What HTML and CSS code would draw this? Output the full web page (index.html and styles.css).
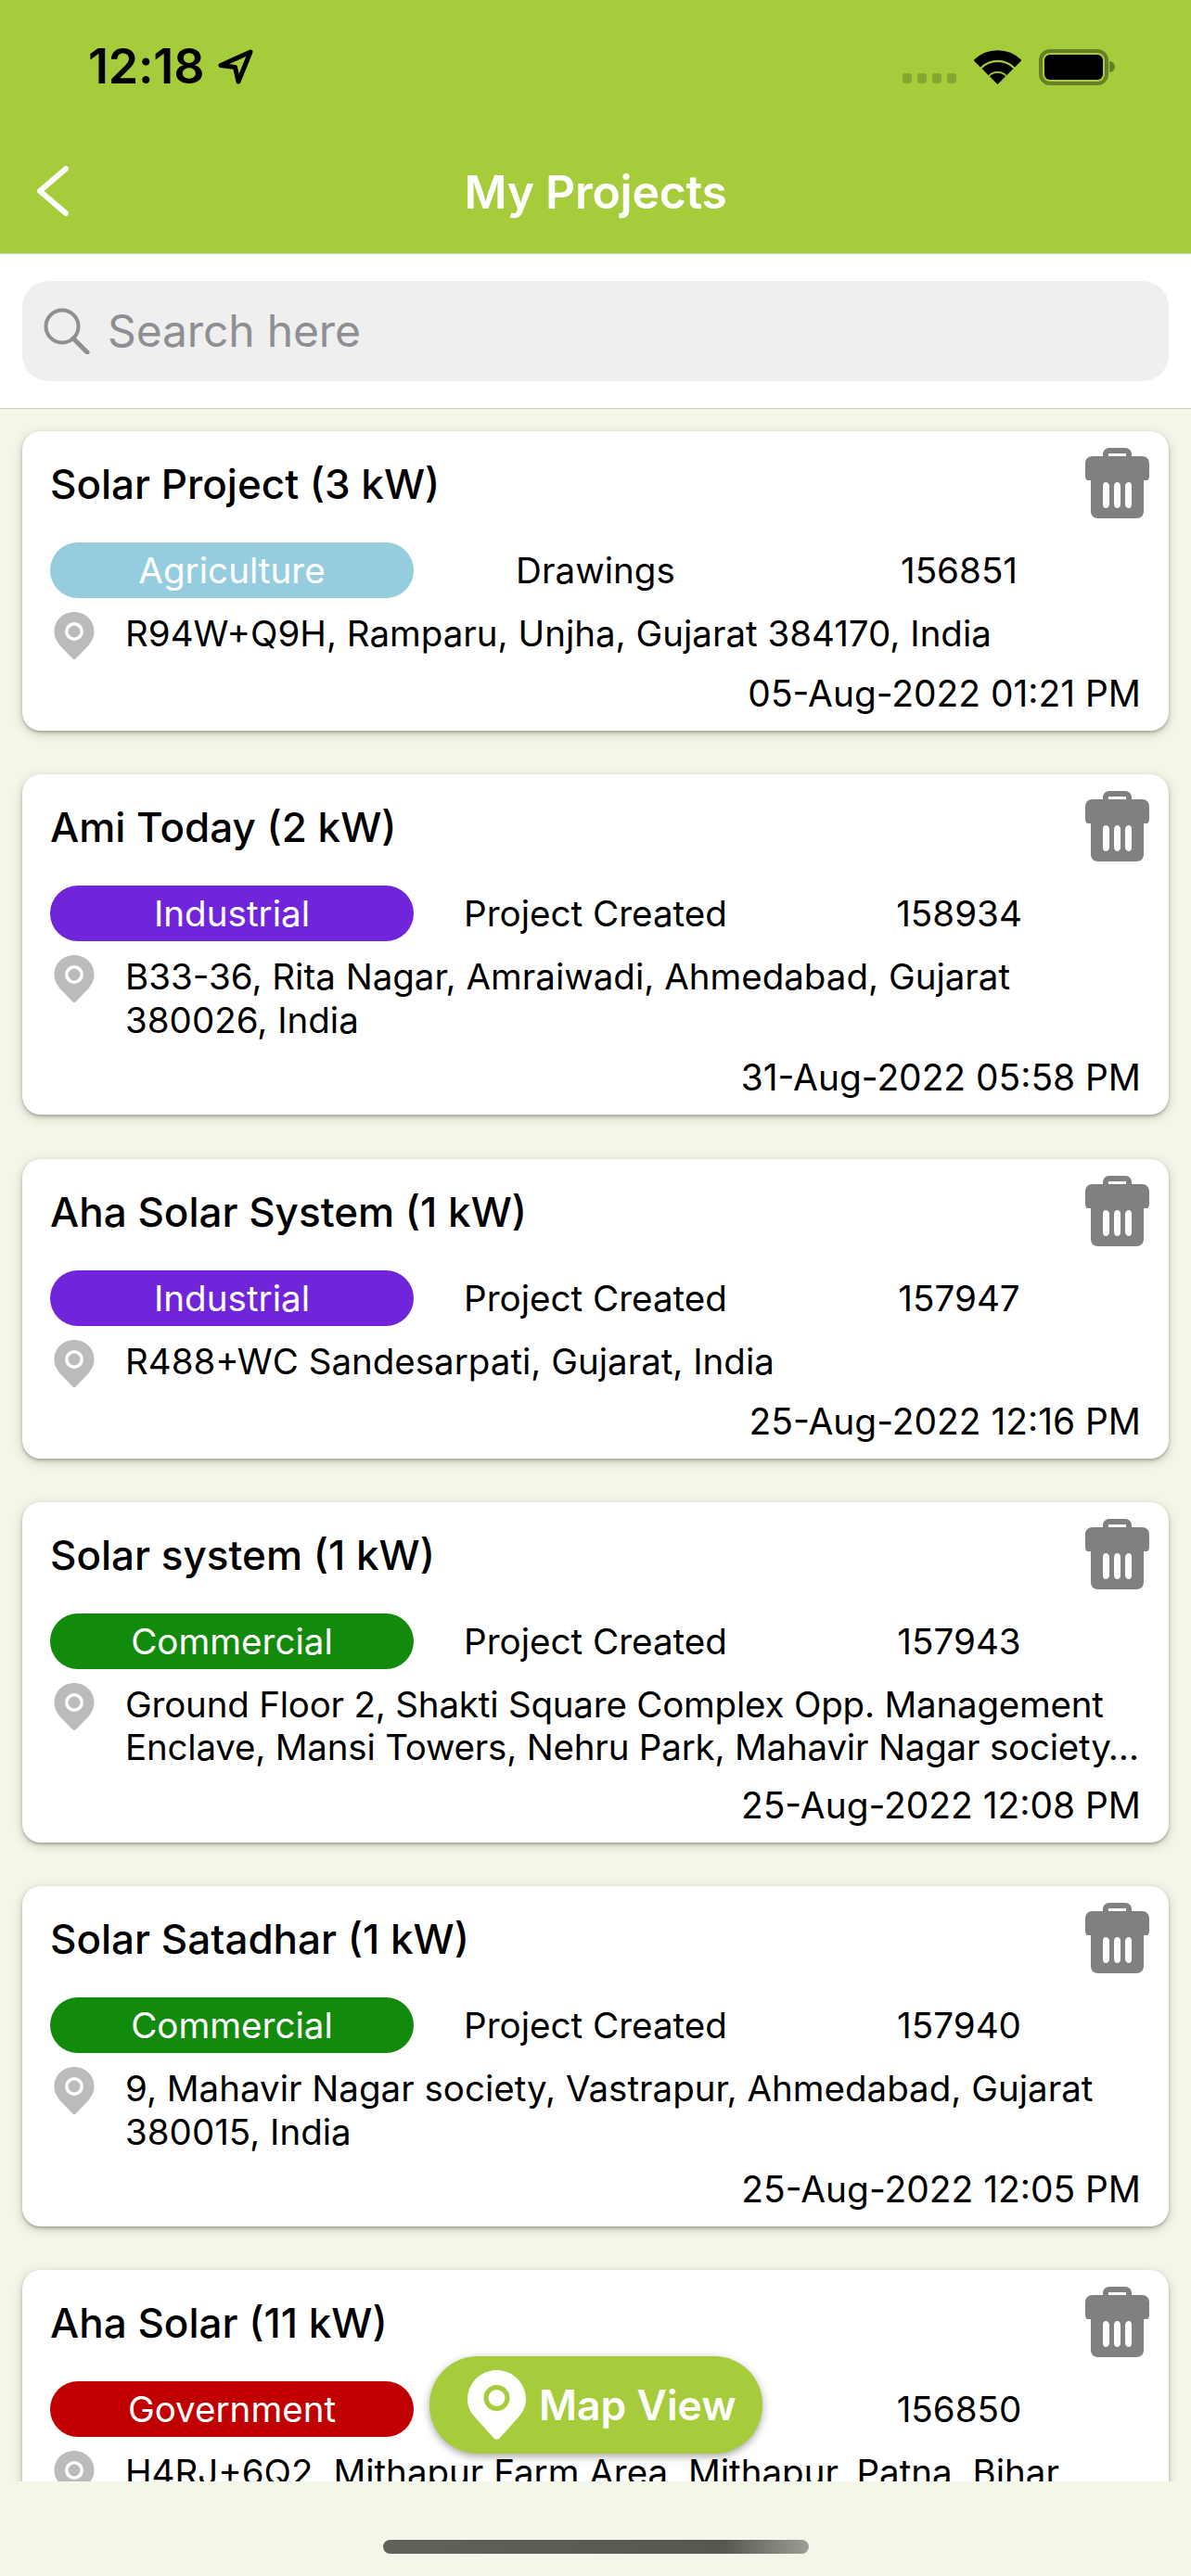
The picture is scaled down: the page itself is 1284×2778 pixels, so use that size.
FILE: index.html
```html
<!DOCTYPE html>
<html lang="en">
<head>
<meta charset="utf-8">
<title>My Projects</title>
<link rel="stylesheet" href="styles.css">
</head>
<body>
<svg class="defs" width="0" height="0" aria-hidden="true">
  <symbol id="trash" viewBox="0 0 69 76">
    <path fill="#808080" fill-rule="evenodd" d="M19 9V7c0-4 3-7 7-7h17c4 0 7 3 7 7v2h11c5 0 8 3 8 8v13c0 3-1 5-3 5h-3v33c0 5-3 8-8 8H14c-5 0-8-3-8-8V35H3c-2 0-3-2-3-5V17c0-5 3-8 8-8h11zM25 6v3h19V6H25zM22 37c-2 0-3 2-3 4v20c0 2 1 4 3 4s4-2 4-4V41c0-2-2-4-4-4zM34.500 37c-2 0-3.500 2-3.500 4v20c0 2 1.500 4 3.500 4s3.500-2 3.500-4V41c0-2-1.500-4-3.500-4zM47 37c-2 0-4 2-4 4v20c0 2 2 4 4 4s3-2 3-4V41c0-2-1-4-3-4z"/>
  </symbol>
  <symbol id="pin" viewBox="0 0 44 51">
    <path fill="#bbb" fill-rule="evenodd" d="M22 0c12 0 21.500 9 21.500 21 0 6-2.500 10.500-6 15L24 50c-1 1.300-3 1.300-4 0L6.500 36C3 31.500.5 27 .5 21 .5 9 10 0 22 0zm0 11a10 10 0 1 0 0 20 10 10 0 0 0 0-20zm0 3.500a6.500 6.500 0 1 1 0 13 6.500 6.500 0 0 1 0-13z"/>
  </symbol>
</svg>

<div class="app">
  <header class="topbar">
    <div class="status">
      <div class="status-left">
        <span class="clock">12:18</span>
        <svg class="arrow" viewBox="0 0 38 38"><path d="M35 3 3 17.500l15.500 2 3.500 15.500z" fill="none" stroke="#000" stroke-width="5" stroke-linejoin="round"/></svg>
      </div>
      <div class="status-right">
        <div class="signal"><i></i><i></i><i></i><i></i></div>
        <svg class="wifi" viewBox="0 0 51 37"><path d="M3.200 14.700A31.500 31.500 0 0 1 47.800 14.700" fill="none" stroke="#000" stroke-width="10.500"/><path d="M12.100 23.600A19 19 0 0 1 38.900 23.600" fill="none" stroke="#000" stroke-width="10"/><path d="M25.500 37 16.800 28.300A12.300 12.300 0 0 1 34.200 28.300z"/></svg>
        <div class="battery"><div class="battery-fill"></div></div>
        <div class="battery-nub"></div>
      </div>
    </div>
    <div class="nav">
      <svg class="back" viewBox="0 0 39 56"><path d="M34 4 6 28l28 24" fill="none" stroke="#fff" stroke-width="6" stroke-linecap="round" stroke-linejoin="round"/></svg>
      <h1 class="nav-title">My Projects</h1>
    </div>
  </header>

  <section class="search-wrap">
    <div class="search">
      <svg class="search-icon" viewBox="0 0 50 50"><circle cx="20" cy="20" r="17.500" fill="none" stroke="#8e8e93" stroke-width="4"/><path d="m32 33 15 15" stroke="#8e8e93" stroke-width="5" stroke-linecap="round"/></svg>
      <span class="search-text">Search here</span>
    </div>
  </section>

  <main class="list">
    <article class="card">
      <h2 class="card-title">Solar Project (3 kW)</h2>
      <svg class="trash"><use href="#trash"/></svg>
      <div class="meta">
        <span class="pill pill-agri">Agriculture</span>
        <span class="meta-cell">Drawings</span>
        <span class="meta-cell">156851</span>
      </div>
      <div class="addr">
        <svg class="pin"><use href="#pin"/></svg>
        <p class="addr-text">R94W+Q9H, Ramparu, Unjha, Gujarat 384170, India</p>
      </div>
      <div class="date">05-Aug-2022 01:21 PM</div>
    </article>

    <article class="card">
      <h2 class="card-title">Ami Today (2 kW)</h2>
      <svg class="trash"><use href="#trash"/></svg>
      <div class="meta">
        <span class="pill pill-ind">Industrial</span>
        <span class="meta-cell">Project Created</span>
        <span class="meta-cell">158934</span>
      </div>
      <div class="addr">
        <svg class="pin"><use href="#pin"/></svg>
        <p class="addr-text">B33-36, Rita Nagar, Amraiwadi, Ahmedabad, Gujarat 380026, India</p>
      </div>
      <div class="date">31-Aug-2022 05:58 PM</div>
    </article>

    <article class="card">
      <h2 class="card-title">Aha Solar System (1 kW)</h2>
      <svg class="trash"><use href="#trash"/></svg>
      <div class="meta">
        <span class="pill pill-ind">Industrial</span>
        <span class="meta-cell">Project Created</span>
        <span class="meta-cell">157947</span>
      </div>
      <div class="addr">
        <svg class="pin"><use href="#pin"/></svg>
        <p class="addr-text">R488+WC Sandesarpati, Gujarat, India</p>
      </div>
      <div class="date">25-Aug-2022 12:16 PM</div>
    </article>

    <article class="card">
      <h2 class="card-title">Solar system (1 kW)</h2>
      <svg class="trash"><use href="#trash"/></svg>
      <div class="meta">
        <span class="pill pill-com">Commercial</span>
        <span class="meta-cell">Project Created</span>
        <span class="meta-cell">157943</span>
      </div>
      <div class="addr">
        <svg class="pin"><use href="#pin"/></svg>
        <p class="addr-text addr-tight">Ground Floor 2, Shakti Square Complex Opp. Management Enclave, Mansi Towers, Nehru Park, Mahavir Nagar society…</p>
      </div>
      <div class="date">25-Aug-2022 12:08 PM</div>
    </article>

    <article class="card">
      <h2 class="card-title">Solar Satadhar (1 kW)</h2>
      <svg class="trash"><use href="#trash"/></svg>
      <div class="meta">
        <span class="pill pill-com">Commercial</span>
        <span class="meta-cell">Project Created</span>
        <span class="meta-cell">157940</span>
      </div>
      <div class="addr">
        <svg class="pin"><use href="#pin"/></svg>
        <p class="addr-text">9, Mahavir Nagar society, Vastrapur, Ahmedabad, Gujarat 380015, India</p>
      </div>
      <div class="date">25-Aug-2022 12:05 PM</div>
    </article>

    <article class="card">
      <h2 class="card-title">Aha Solar (11 kW)</h2>
      <svg class="trash"><use href="#trash"/></svg>
      <div class="meta">
        <span class="pill pill-gov">Government</span>
        <span class="meta-cell">Project Created</span>
        <span class="meta-cell">156850</span>
      </div>
      <div class="addr">
        <svg class="pin"><use href="#pin"/></svg>
        <p class="addr-text">H4RJ+6Q2, Mithapur Farm Area, Mithapur, Patna, Bihar</p>
      </div>
    </article>
  </main>

  <footer class="foot"><div class="home-bar"></div></footer>

  <button class="map-btn" type="button">
    <svg class="map-pin" viewBox="0 0 63 75"><path fill="#fff" d="M31.500 0C49 0 63 14 63 31.500 63 41 58 48 52 54L34.500 73.500c-1.600 1.500-4.400 1.500-6 0L11 54C5 48 0 41 0 31.500 0 14 14 0 31.500 0z"/><circle cx="31.500" cy="30" r="11.500" fill="none" stroke="#a6cc3c" stroke-width="5"/></svg>
    <span class="map-label">Map View</span>
  </button>
</div>
</body>
</html>
```

FILE: styles.css
```css
* { box-sizing: border-box; }
html, body { margin: 0; padding: 0; }
body {
  width: 1284px;
  height: 2778px;
  overflow: hidden;
  font-family: Inter, "Liberation Sans", sans-serif;
  color: #000;
  background: #f3f7e9;
}
.defs { position: absolute; }
.app {
  position: relative;
  width: 1284px;
  height: 2778px;
  display: flex;
  flex-direction: column;
}

/* header */
.topbar {
  height: 274px;
  flex: none;
  background: #a6cc3c;
  border-bottom: 1px solid #c9cfbd;
  padding-top: 48px;
}
.status {
  height: 48px;
  padding: 0 82px 0 95px;
  display: flex;
  justify-content: space-between;
  align-items: center;
}
.status-left { display: flex; align-items: center; gap: 15px; }
.clock { font-size: 52px; font-weight: 600; line-height: 48px; letter-spacing: -0.2px; }
.arrow { width: 38px; height: 38px; display: block; }
.status-right { display: flex; align-items: center; }
.signal { display: flex; gap: 6px; align-self: flex-end; margin: 0 19px 2px 0; }
.signal i { width: 10px; height: 11px; border-radius: 3px; background: #87a532; display: block; }
.wifi { width: 51px; height: 37px; display: block; margin-right: 19px; }
.battery {
  width: 75px;
  height: 39px;
  border: 4px solid #687f26;
  border-radius: 12px;
  padding: 2px;
}
.battery-fill { height: 100%; background: #000; border-radius: 6px; }
.battery-nub { width: 6px; height: 12px; margin-left: 1px; background: #687f26; border-radius: 0 6px 6px 0; }
.nav {
  position: relative;
  margin-top: 81px;
  height: 60px;
  display: flex;
  align-items: center;
  justify-content: center;
}
.back { position: absolute; left: 37px; top: 1px; width: 39px; height: 56px; }
.nav-title { margin: 0; font-size: 50px; line-height: 60px; font-weight: 600; color: #fff; letter-spacing: -0.3px; }

/* search */
.search-wrap {
  height: 167px;
  flex: none;
  background: #fff;
  border-bottom: 1px solid #c9cdbf;
  padding: 29px 24px 0;
}
.search {
  height: 108px;
  border-radius: 28px;
  background: #efeff0;
  display: flex;
  align-items: center;
  padding-left: 23px;
}
.search-icon { width: 50px; height: 50px; display: block; margin-right: 19px; }
.search-text { font-size: 48px; line-height: 60px; color: #8e8e93; letter-spacing: -0.15px; }

/* list */
.list {
  flex: 1;
  min-height: 0;
  overflow: hidden;
  padding: 24px 24px 0;
  display: flex;
  flex-direction: column;
  gap: 47.25px;
}
.card {
  position: relative;
  flex: none;
  background: #fff;
  border-radius: 20px;
  padding: 31px 30px 17px;
  box-shadow: 0 2px 3px rgba(60, 62, 45, 0.3), 0 3px 11px rgba(60, 62, 45, 0.25);
}
.card-title { margin: 0; font-size: 44px; line-height: 52px; font-weight: 500; }
.trash { position: absolute; right: 21px; top: 18px; width: 69px; height: 76px; }
.meta {
  display: grid;
  grid-template-columns: repeat(3, 392px);
  margin-top: 37px;
  align-items: center;
}
.meta-cell { text-align: center; font-size: 38.6px; line-height: 46px; }
.pill {
  height: 60px;
  border-radius: 30px;
  color: #fff;
  text-align: center;
  font-size: 38.6px;
  line-height: 60px;
}
.pill-agri { background: #95cddf; }
.pill-ind { background: #7125db; }
.pill-com { background: #128a0b; }
.pill-gov { background: #c00000; }
.addr {
  display: flex;
  margin: 15px -10px 0 0;
  min-height: 49px;
  align-items: flex-start;
}
.pin { width: 44px; height: 51px; flex: none; margin: 0 33px -2px 4px; }
.addr-text { margin: 0; font-size: 38.5px; line-height: 46.5px; }
.addr-tight { letter-spacing: -0.2px; }
.date { margin-top: 16px; text-align: right; font-size: 38.9px; line-height: 46px; }

/* footer */
.foot {
  height: 102px;
  flex: none;
  background: #f3f7e9;
  position: relative;
  padding-top: 63px;
  display: flex;
  justify-content: center;
}
.home-bar {
  width: 459px;
  height: 15px;
  border-radius: 8px;
  background: linear-gradient(90deg, #5f6359, #55584f 80%, #9c9f93);
}

/* floating button */
.map-btn {
  position: absolute;
  left: 463px;
  top: 2541px;
  width: 359px;
  height: 105px;
  border: 0;
  border-radius: 52px;
  background: #a6cc3c;
  box-shadow: 0 3px 8px rgba(60, 60, 60, 0.45);
  display: flex;
  align-items: center;
  padding: 0 0 0 41px;
  gap: 14px;
  font-family: inherit;
}
.map-pin { width: 63px; height: 75px; display: block; flex: none; }
.map-label { font-size: 44.500px; line-height: 56px; font-weight: 600; color: #fff; white-space: nowrap; }
```
